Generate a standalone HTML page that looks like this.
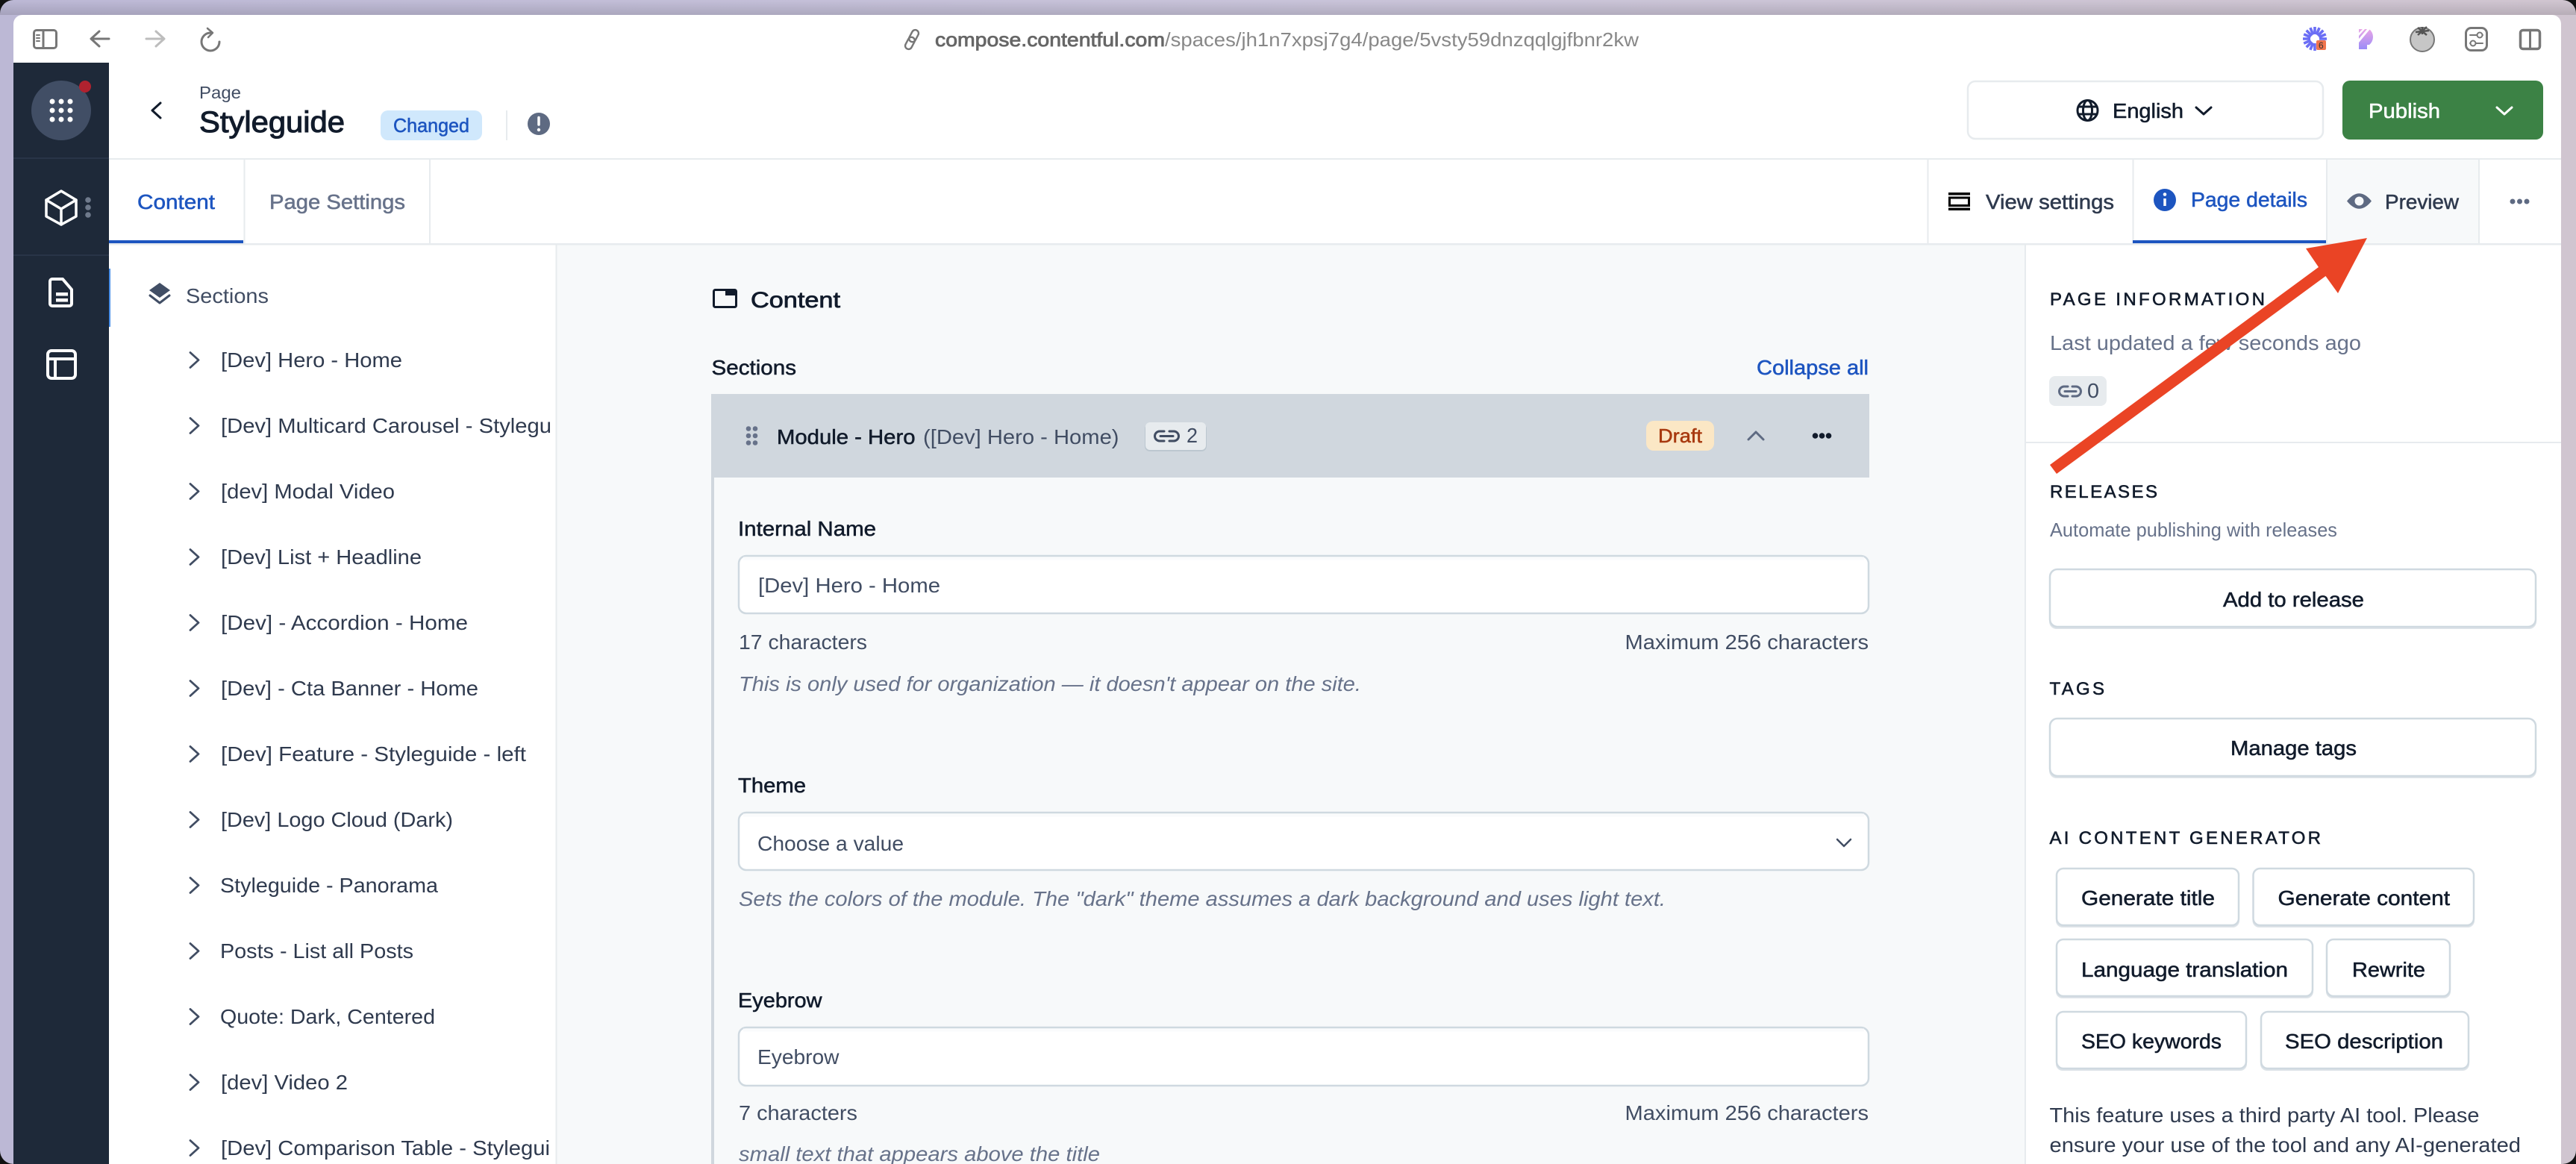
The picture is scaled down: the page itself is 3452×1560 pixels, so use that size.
<!DOCTYPE html>
<html lang="en">
<head>
<meta charset="utf-8">
<title>Styleguide - Page</title>
<style>
html,body{margin:0;padding:0;background:#111;width:3452px;height:1560px;overflow:hidden}
svg{display:block}
text{font-family:"Liberation Sans",sans-serif;font-size:28px;fill:#414d63;stroke:#414d63;stroke-width:0}
.d{fill:#111b2b;stroke:#111b2b}
.g{fill:#2f3a4e;stroke:#2f3a4e}
.u{fill:#67728a;stroke:#67728a}
.b{fill:#1d55c0;stroke:#1d55c0}
.w{fill:#fff;stroke:#fff}
.m{stroke-width:.55px}
.h{font-size:24px;stroke-width:.6px}
.i{font-style:italic}
.s{stroke-width:0;font-size:26px}
.ic{fill:none;stroke-linecap:round;stroke-linejoin:round}
</style>
</head>
<body>
<svg width="3452" height="1560" viewBox="0 0 3452 1560" xmlns="http://www.w3.org/2000/svg">
<defs>
<linearGradient id="bg" x1="0" x2="1" y1="0" y2="0"><stop offset="0" stop-color="#bcb8d5"/><stop offset=".5" stop-color="#c8c3d9"/><stop offset="1" stop-color="#d0c5d0"/></linearGradient>
<linearGradient id="shade" x1="0" x2="0" y1="0" y2="1"><stop offset="0" stop-color="#000" stop-opacity="0"/><stop offset="1" stop-color="#000" stop-opacity=".12"/></linearGradient>
<linearGradient id="pg" x1="0" x2="0" y1="0" y2="1"><stop offset="0" stop-color="#e9a6e6"/><stop offset="1" stop-color="#9a8cf8"/></linearGradient>
<clipPath id="tree"><rect x="146" y="328" width="595" height="1232"/></clipPath>
</defs>

<!-- desktop backdrop -->
<rect x="0" y="0" width="3452" height="1560" rx="18" fill="url(#bg)"/>
<rect x="0" y="1" width="3452" height="19" fill="url(#shade)"/>

<!-- browser window -->
<path d="M30 20H3420a12 12 0 0 1 12 12V1560H18V32a12 12 0 0 1 12-12Z" fill="#fff"/>

<!-- toolbar icons -->
<g class="ic" stroke="#777" stroke-width="3">
<rect x="45.5" y="40.5" width="30" height="24" rx="3.5"/>
<path d="M58 41V64"/>
<path d="M49 47h4M49 51h4M49 55h4" stroke-width="2"/>
<path d="M146 52H123M133 42 122 52 133 62"/>
<path d="M196 52H219M209 42 220 52 209 62" stroke="#bdbdbd"/>
<path d="M282 44a12 12 0 1 0 12 12"/>
<path d="M278 38 285 44 279 50" stroke-width="2.5"/>
</g>
<g class="ic" stroke="#777" stroke-width="2.4" transform="rotate(-62 1222 53)">
<rect x="1208" y="48.5" width="17" height="9" rx="4.5"/>
<rect x="1219" y="48.5" width="17" height="9" rx="4.5"/>
</g>
<text x="1253" y="62" style="font-size:26px;fill:#666;stroke:#666;stroke-width:.8px" textLength="308" lengthAdjust="spacingAndGlyphs">compose.contentful.com</text>
<text x="1561" y="62" style="font-size:26px;fill:#888;stroke:#888" textLength="635" lengthAdjust="spacingAndGlyphs">/spaces/jh1n7xpsj7g4/page/5vsty59dnzqqlgjfbnr2kw</text>

<!-- extension icons -->
<g stroke="#6b6ef5" stroke-width="3.6" stroke-linecap="butt">
<path d="M3102 36V46M3102 58V68M3086 52H3096M3108 52H3118M3090.7 40.7 3098 48M3106 56 3113.300 63.300M3113.300 40.700 3106 48M3098 56 3090.700 63.300M3095.900 37.200 3099.800 46.500M3108.100 37.200 3104.200 46.500M3087.200 45.900 3096.500 49.800M3116.800 45.900 3107.500 49.800M3087.200 58.100 3096.500 54.200M3095.900 66.800 3099.800 57.500"/>
</g>
<rect x="3104" y="54" width="13" height="13" rx="2" fill="#f0744e"/>
<text x="3107" y="65" style="font-size:12px;fill:#333;stroke:#333">6</text>
<path d="M3161 39H3175A13.500 13.500 0 0 1 3175 60H3172V66H3161Z" fill="url(#pg)"/>
<path d="M3161 52 3172 39H3176L3161 57ZM3161 44 3166 39H3169L3161 48Z" fill="#fff"/>
<circle cx="3246" cy="53" r="16" fill="#c6c6c6" stroke="#777" stroke-width="2"/>
<path d="M3246 36V46M3237 43 3255 41M3240 37 3252 47M3252 36 3240 47" stroke="#555" stroke-width="2.5"/>
<g class="ic" stroke="#777" stroke-width="3">
<rect x="3304.5" y="37.500" width="28" height="30" rx="7"/>
<path d="M3310 47H3327M3310 58H3327" stroke-width="2"/>
<circle cx="3323" cy="47" r="3.500" fill="#fff" stroke-width="2"/>
<circle cx="3314" cy="58" r="3.500" fill="#fff" stroke-width="2"/>
<rect x="3377.500" y="40.500" width="26" height="25" rx="3.500" stroke-width="3.500"/>
<path d="M3390.500 41V65"/>
</g>

<!-- left nav rail -->
<rect x="18" y="84" width="128" height="1476" fill="#1e2939"/>
<rect x="18" y="211" width="128" height="2" fill="#283447"/>
<rect x="18" y="341" width="128" height="2" fill="#283447"/>
<circle cx="82" cy="148" r="40" fill="#414e65"/>
<circle cx="114" cy="116" r="8" fill="#b0222f"/>
<g fill="#fff">
<circle cx="70" cy="136" r="3.500"/><circle cx="82" cy="136" r="3.500"/><circle cx="94" cy="136" r="3.500"/>
<circle cx="70" cy="148" r="3.500"/><circle cx="82" cy="148" r="3.500"/><circle cx="94" cy="148" r="3.500"/>
<circle cx="70" cy="160" r="3.500"/><circle cx="82" cy="160" r="3.500"/><circle cx="94" cy="160" r="3.500"/>
</g>
<g class="ic" stroke="#fff" stroke-width="3.500">
<path d="M82 256 102 268V290L82 301 62 290V268Z"/>
<path d="M62 268 82 280 102 268M82 280V301"/>
</g>
<g fill="#6f7a8c"><circle cx="118" cy="268" r="3.800"/><circle cx="118" cy="278" r="3.800"/><circle cx="118" cy="288" r="3.800"/></g>
<path class="ic" stroke="#fff" stroke-width="4" d="M70 374H84L96 388V407a3 3 0 0 1-3 3H70a3 3 0 0 1-3-3V377a3 3 0 0 1 3-3Z"/>
<path d="M75 392H91V396.500H75ZM75 400H91V404.500H75Z" fill="#fff"/>
<g class="ic" stroke="#fff" stroke-width="4">
<rect x="64" y="470" width="37" height="37" rx="5"/>
<path d="M64 481H101M74 481V507"/>
</g>

<!-- header -->
<path class="ic" stroke="#111b2b" stroke-width="3" d="M215 138 204 148 215 158"/>
<text x="267" y="132" style="font-size:23px" textLength="56" lengthAdjust="spacingAndGlyphs">Page</text>
<text x="267" y="177" class="d m" style="font-size:40px;stroke-width:1.1px" textLength="195" lengthAdjust="spacingAndGlyphs">Styleguide</text>
<rect x="510" y="148" width="136" height="40" rx="10" fill="#d0e8fc"/>
<text x="527" y="177" class="b m" style="font-size:26px" textLength="102" lengthAdjust="spacingAndGlyphs">Changed</text>
<rect x="678" y="148" width="2" height="40" fill="#e7ebee"/>
<circle cx="722" cy="166" r="15" fill="#5e6a82"/>
<path d="M722 157.500V167" stroke="#fff" stroke-width="3.500" stroke-linecap="round"/>
<circle cx="722" cy="174" r="2.200" fill="#fff"/>

<rect x="2637" y="109" width="476" height="77" rx="10" fill="#fff" stroke="#e7ebee" stroke-width="2.500"/>
<g class="ic" stroke="#111b2b" stroke-width="3">
<circle cx="2797.500" cy="148" r="13.500"/>
<ellipse cx="2797.500" cy="148" rx="6" ry="13.500"/>
<path d="M2785 143H2810M2785 153H2810"/>
<path d="M2943 144 2953 153 2963 144"/>
</g>
<text x="2831" y="158" class="d m" textLength="95" lengthAdjust="spacingAndGlyphs">English</text>
<rect x="3139" y="108" width="269" height="79" rx="10" fill="#3c8245"/>
<text x="3174" y="158" class="w m" textLength="96" lengthAdjust="spacingAndGlyphs">Publish</text>
<path class="ic" stroke="#fff" stroke-width="3" d="M3346 144 3356 153 3366 144"/>

<rect x="146" y="212" width="3286" height="2" fill="#e7ebee"/>

<!-- tabs row -->
<rect x="146" y="322" width="180" height="4" fill="#1d55c0"/>
<text x="184" y="280" class="b m" textLength="104" lengthAdjust="spacingAndGlyphs">Content</text>
<rect x="326.500" y="214" width="2" height="112" fill="#e7ebee"/>
<text x="361" y="280" class="u m" textLength="182" lengthAdjust="spacingAndGlyphs">Page Settings</text>
<rect x="575" y="214" width="2" height="112" fill="#e7ebee"/>

<rect x="2582.500" y="214" width="2" height="112" fill="#e7ebee"/>
<path d="M2611 258H2640V261.500H2611ZM2611 278.500H2640V282H2611Z" fill="#000"/>
<rect x="2612.500" y="265" width="26" height="10.500" fill="none" stroke="#000" stroke-width="3"/>
<text x="2661" y="280" class="g m" textLength="172" lengthAdjust="spacingAndGlyphs">View settings</text>
<rect x="2857.500" y="214" width="2" height="112" fill="#e7ebee"/>
<circle cx="2901" cy="268" r="15" fill="#1d55c0"/>
<circle cx="2901" cy="260.500" r="2.300" fill="#fff"/>
<path d="M2901 266V276" stroke="#fff" stroke-width="3.500"/>
<text x="2936" y="277" class="b m" textLength="156" lengthAdjust="spacingAndGlyphs">Page details</text>
<rect x="2858" y="322" width="259" height="4" fill="#1d55c0"/>
<rect x="3117" y="214" width="2" height="112" fill="#e7ebee"/>
<rect x="3119" y="214" width="202" height="112" fill="#f7f9fa"/>
<rect x="3321" y="214" width="2" height="112" fill="#e7ebee"/>
<path d="M3145 269.500Q3161.500 249 3178 269.500Q3161.500 290 3145 269.500Z" fill="#5e6a82"/>
<circle cx="3161.500" cy="269.500" r="6" fill="#f7f9fa"/>
<text x="3196" y="280" class="g m" textLength="99" lengthAdjust="spacingAndGlyphs">Preview</text>
<g fill="#5e6a82"><circle cx="3367" cy="270" r="3.500"/><circle cx="3376.500" cy="270" r="3.500"/><circle cx="3386" cy="270" r="3.500"/></g>

<rect x="146" y="326" width="3286" height="2.500" fill="#e7ebee"/>

<!-- tree panel -->
<rect x="146" y="328.500" width="598" height="1232" fill="#fff"/>
<rect x="744.500" y="328.500" width="2" height="1232" fill="#e7ebee"/>
<rect x="146" y="360" width="2" height="78" fill="#4a8fe8"/>
<path d="M214 379 228 389 214 399 200 389Z" fill="#414e65"/>
<path class="ic" stroke="#414e65" stroke-width="3" d="M201 396 214 406 227 396"/>
<text x="249" y="406" textLength="111" lengthAdjust="spacingAndGlyphs">Sections</text>

<g class="ic" stroke="#414d63" stroke-width="2.800">
<path d="M255 472.500l11 10-11 10"/>
<path d="M255 560.500l11 10-11 10"/>
<path d="M255 648.500l11 10-11 10"/>
<path d="M255 736.500l11 10-11 10"/>
<path d="M255 824.500l11 10-11 10"/>
<path d="M255 912.500l11 10-11 10"/>
<path d="M255 1000.500l11 10-11 10"/>
<path d="M255 1088.500l11 10-11 10"/>
<path d="M255 1176.500l11 10-11 10"/>
<path d="M255 1264.500l11 10-11 10"/>
<path d="M255 1352.500l11 10-11 10"/>
<path d="M255 1440.500l11 10-11 10"/>
<path d="M255 1528.500l11 10-11 10"/>
</g>
<g clip-path="url(#tree)">
<text x="296" y="492" class="g" textLength="243" lengthAdjust="spacingAndGlyphs">[Dev] Hero - Home</text>
<text x="296" y="580" class="g" textLength="443" lengthAdjust="spacingAndGlyphs">[Dev] Multicard Carousel - Stylegu</text>
<text x="296" y="668" class="g" textLength="233" lengthAdjust="spacingAndGlyphs">[dev] Modal Video</text>
<text x="296" y="756" class="g" textLength="269" lengthAdjust="spacingAndGlyphs">[Dev] List + Headline</text>
<text x="296" y="844" class="g" textLength="331" lengthAdjust="spacingAndGlyphs">[Dev] - Accordion - Home</text>
<text x="296" y="932" class="g" textLength="345" lengthAdjust="spacingAndGlyphs">[Dev] - Cta Banner - Home</text>
<text x="296" y="1020" class="g" textLength="409" lengthAdjust="spacingAndGlyphs">[Dev] Feature - Styleguide - left</text>
<text x="296" y="1108" class="g" textLength="311" lengthAdjust="spacingAndGlyphs">[Dev] Logo Cloud (Dark)</text>
<text x="295" y="1196" class="g" textLength="292" lengthAdjust="spacingAndGlyphs">Styleguide - Panorama</text>
<text x="295" y="1284" class="g" textLength="259" lengthAdjust="spacingAndGlyphs">Posts - List all Posts</text>
<text x="295" y="1372" class="g" textLength="288" lengthAdjust="spacingAndGlyphs">Quote: Dark, Centered</text>
<text x="296" y="1460" class="g" textLength="170" lengthAdjust="spacingAndGlyphs">[dev] Video 2</text>
<text x="296" y="1548" class="g" textLength="441" lengthAdjust="spacingAndGlyphs">[Dev] Comparison Table - Stylegui</text>
</g>

<!-- main content -->
<rect x="746.500" y="328.500" width="1966.500" height="1232" fill="#f7f9fa"/>
<rect x="956.500" y="388.500" width="30" height="23" rx="2" fill="none" stroke="#111b2b" stroke-width="3"/>
<rect x="972" y="388" width="15" height="8" fill="#111b2b"/>
<text x="1006" y="412" class="d m" style="font-size:30px;stroke-width:.8px" textLength="120" lengthAdjust="spacingAndGlyphs">Content</text>
<text x="953.500" y="502" class="d m" textLength="113.500" lengthAdjust="spacingAndGlyphs">Sections</text>
<text x="2354" y="502" class="b m" textLength="150" lengthAdjust="spacingAndGlyphs">Collapse all</text>

<rect x="953" y="528" width="1552" height="112" fill="#d0d7de"/>
<rect x="953" y="640" width="4" height="920" fill="#d0d7de"/>
<g fill="#67728a">
<circle cx="1003" cy="574.500" r="3.300"/><circle cx="1012" cy="574.500" r="3.300"/>
<circle cx="1003" cy="584" r="3.300"/><circle cx="1012" cy="584" r="3.300"/>
<circle cx="1003" cy="593.500" r="3.300"/><circle cx="1012" cy="593.500" r="3.300"/>
</g>
<text x="1041" y="595" class="d m" textLength="185.500" lengthAdjust="spacingAndGlyphs">Module - Hero</text>
<text x="1237" y="595" textLength="262.500" lengthAdjust="spacingAndGlyphs">([Dev] Hero - Home)</text>
<rect x="1534" y="568" width="83" height="37" rx="7" fill="#bcc7d0"/>
<rect x="1535" y="566" width="81" height="37" rx="6" fill="#e7ebee"/>
<g class="ic" stroke="#414d63" stroke-width="3">
<path d="M1560 578h-6a6.500 6.500 0 0 0 0 13h6M1567 578h6a6.500 6.500 0 0 1 0 13h-6M1555 584.500h17"/>
</g>
<text x="1590" y="593" textLength="15" lengthAdjust="spacingAndGlyphs">2</text>
<rect x="2206" y="564" width="91" height="40" rx="10" fill="#fbe7c5"/>
<text x="2222" y="593" class="m" style="font-size:26px;fill:#a83a10;stroke:#a83a10" textLength="59" lengthAdjust="spacingAndGlyphs">Draft</text>
<path class="ic" stroke="#5e6a82" stroke-width="3" d="M2343 589 2353 579 2363 589"/>
<g fill="#111b2b"><circle cx="2432.500" cy="584" r="3.800"/><circle cx="2441.500" cy="584" r="3.800"/><circle cx="2450.500" cy="584" r="3.800"/></g>

<!-- Internal Name -->
<text x="989" y="718" class="d m" textLength="185" lengthAdjust="spacingAndGlyphs">Internal Name</text>
<rect x="990" y="745" width="1514" height="77" rx="10" fill="#fff" stroke="#cfd9e0" stroke-width="2.500"/>
<rect x="996" y="746.500" width="1502" height="4" fill="#fafbfc"/>
<text x="1016" y="794" textLength="244" lengthAdjust="spacingAndGlyphs">[Dev] Hero - Home</text>
<text x="990" y="870" textLength="172" lengthAdjust="spacingAndGlyphs">17 characters</text>
<text x="2177.500" y="870" textLength="326.500" lengthAdjust="spacingAndGlyphs">Maximum 256 characters</text>
<text x="990" y="926" class="u i" textLength="834" lengthAdjust="spacingAndGlyphs">This is only used for organization — it doesn't appear on the site.</text>

<!-- Theme -->
<text x="989" y="1062" class="d m" textLength="91" lengthAdjust="spacingAndGlyphs">Theme</text>
<rect x="990" y="1089" width="1514" height="77" rx="10" fill="#fff" stroke="#cfd9e0" stroke-width="2.500"/>
<rect x="996" y="1090.500" width="1502" height="4" fill="#fafbfc"/>
<text x="1015" y="1140" textLength="196" lengthAdjust="spacingAndGlyphs">Choose a value</text>
<path class="ic" stroke="#414d63" stroke-width="2.500" d="M2462 1125 2471 1134 2480 1125"/>
<text x="990" y="1214" class="u i" textLength="1242" lengthAdjust="spacingAndGlyphs">Sets the colors of the module. The "dark" theme assumes a dark background and uses light text.</text>

<!-- Eyebrow -->
<text x="989" y="1350" class="d m" textLength="112.500" lengthAdjust="spacingAndGlyphs">Eyebrow</text>
<rect x="990" y="1377" width="1514" height="78" rx="10" fill="#fff" stroke="#cfd9e0" stroke-width="2.500"/>
<rect x="996" y="1378.500" width="1502" height="4" fill="#fafbfc"/>
<text x="1015" y="1426" textLength="109.500" lengthAdjust="spacingAndGlyphs">Eyebrow</text>
<text x="990" y="1501" textLength="159" lengthAdjust="spacingAndGlyphs">7 characters</text>
<text x="2177.500" y="1501" textLength="326.500" lengthAdjust="spacingAndGlyphs">Maximum 256 characters</text>
<text x="990" y="1556" class="u i" textLength="484" lengthAdjust="spacingAndGlyphs">small text that appears above the title</text>

<!-- right panel -->
<rect x="2713" y="328.500" width="719" height="1232" fill="#fff"/>
<rect x="2713" y="328.500" width="2" height="1232" fill="#e7ebee"/>
<text x="2747" y="409" class="d h" textLength="288">PAGE INFORMATION</text>
<text x="2747" y="469" class="u" textLength="417" lengthAdjust="spacingAndGlyphs">Last updated a few seconds ago</text>
<rect x="2746" y="504" width="77" height="40" rx="8" fill="#e7ebee"/>
<path class="ic" stroke="#5e6a82" stroke-width="3" d="M2771 518h-5a6.500 6.500 0 0 0 0 13h5M2777 518h5a6.500 6.500 0 0 1 0 13h-5M2767 524.500h15"/>
<text x="2797" y="533" textLength="16" lengthAdjust="spacingAndGlyphs">0</text>
<rect x="2715" y="592" width="717" height="2" fill="#e7ebee"/>
<text x="2747" y="667" class="d h" textLength="144">RELEASES</text>
<text x="2747" y="719" class="u s" textLength="385" lengthAdjust="spacingAndGlyphs">Automate publishing with releases</text>

<rect x="2746" y="764" width="653" height="79" rx="10" fill="#dde3e8"/>
<rect x="2747" y="763" width="651" height="77" rx="10" fill="#fff" stroke="#cfd9e0" stroke-width="2.500"/>
<text x="2979" y="813" class="d m" textLength="189" lengthAdjust="spacingAndGlyphs">Add to release</text>

<text x="2746.500" y="931" class="d h" textLength="73.500">TAGS</text>
<rect x="2746" y="964" width="653" height="79" rx="10" fill="#dde3e8"/>
<rect x="2747" y="963" width="651" height="77" rx="10" fill="#fff" stroke="#cfd9e0" stroke-width="2.500"/>
<text x="2989" y="1012" class="d m" textLength="169" lengthAdjust="spacingAndGlyphs">Manage tags</text>

<text x="2746.500" y="1131" class="d h" textLength="363.500">AI CONTENT GENERATOR</text>

<rect x="2755" y="1165" width="246" height="78" rx="9" fill="#dde3e8"/>
<rect x="2756" y="1164" width="244" height="76" rx="9" fill="#fff" stroke="#cfd9e0" stroke-width="2.500"/>
<text x="2789" y="1213" class="d m" textLength="179" lengthAdjust="spacingAndGlyphs">Generate title</text>
<rect x="3018.500" y="1165" width="297.500" height="78" rx="9" fill="#dde3e8"/>
<rect x="3019.500" y="1164" width="295.500" height="76" rx="9" fill="#fff" stroke="#cfd9e0" stroke-width="2.500"/>
<text x="3052.500" y="1213" class="d m" textLength="230.500" lengthAdjust="spacingAndGlyphs">Generate content</text>

<rect x="2755" y="1260" width="345" height="78" rx="9" fill="#dde3e8"/>
<rect x="2756" y="1259" width="343" height="76" rx="9" fill="#fff" stroke="#cfd9e0" stroke-width="2.500"/>
<text x="2789" y="1309" class="d m" textLength="277" lengthAdjust="spacingAndGlyphs">Language translation</text>
<rect x="3117" y="1260" width="167" height="78" rx="9" fill="#dde3e8"/>
<rect x="3118" y="1259" width="165" height="76" rx="9" fill="#fff" stroke="#cfd9e0" stroke-width="2.500"/>
<text x="3152" y="1309" class="d m" textLength="98" lengthAdjust="spacingAndGlyphs">Rewrite</text>

<rect x="2755" y="1357" width="256" height="78" rx="9" fill="#dde3e8"/>
<rect x="2756" y="1356" width="254" height="76" rx="9" fill="#fff" stroke="#cfd9e0" stroke-width="2.500"/>
<text x="2789" y="1405" class="d m" textLength="188" lengthAdjust="spacingAndGlyphs">SEO keywords</text>
<rect x="3029" y="1357" width="280" height="78" rx="9" fill="#dde3e8"/>
<rect x="3030" y="1356" width="278" height="76" rx="9" fill="#fff" stroke="#cfd9e0" stroke-width="2.500"/>
<text x="3062" y="1405" class="d m" textLength="212" lengthAdjust="spacingAndGlyphs">SEO description</text>

<text x="2746.500" y="1504" class="g" textLength="576" lengthAdjust="spacingAndGlyphs">This feature uses a third party AI tool. Please</text>
<text x="2746.500" y="1544" class="g" textLength="631.500" lengthAdjust="spacingAndGlyphs">ensure your use of the tool and any AI-generated</text>

<!-- annotation arrow -->
<path d="M2747 623 3107 358 3090 333 3172 319 3133 393 3116.500 370 2756 635Z" fill="#ea4425"/>
</svg>
</body>
</html>
